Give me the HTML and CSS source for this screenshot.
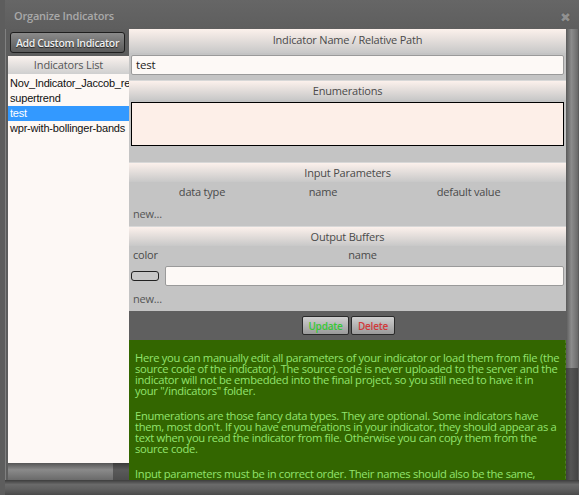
FILE: index.html
```html
<!DOCTYPE html>
<html>
<head>
<meta charset="utf-8">
<link rel="stylesheet" href="styles.css">
</head>
<body>
<div class="window">
  <div class="titlebar">
    <span class="title">Organize Indicators</span>
    <span class="close">&#x2716;</span>
  </div>
  <div class="body">
    <div class="left">
      <button class="add-btn">Add Custom Indicator</button>
      <div class="list-head">Indicators List</div>
      <div class="list">
        <div class="item">Nov_Indicator_Jaccob_re</div>
        <div class="item">supertrend</div>
        <div class="item sel">test</div>
        <div class="item">wpr-with-bollinger-bands</div>
      </div>
      <div class="hscroll"><div class="hthumb"></div></div>
    </div>
    <div class="center">
      <div class="section">
        <div class="head">Indicator Name / Relative Path</div>
        <div class="sbody name-body">
          <div class="input">test</div>
        </div>
      </div>
      <div class="section">
        <div class="head">Enumerations</div>
        <div class="sbody enum-body">
          <div class="textarea"></div>
        </div>
      </div>
      <div class="section">
        <div class="head">Input Parameters</div>
        <div class="sbody">
          <div class="cols3">
            <span>data type</span><span>name</span><span>default value</span>
          </div>
          <div class="new">new...</div>
        </div>
      </div>
      <div class="section">
        <div class="head">Output Buffers</div>
        <div class="sbody">
          <div class="cols2"><span class="c1">color</span><span class="c2">name</span></div>
          <div class="bufrow"><span class="swatch"></span><div class="input wide"></div></div>
          <div class="new">new...</div>
        </div>
      </div>
      <div class="actions">
        <button class="btn upd">Update</button><button class="btn del">Delete</button>
      </div>
      <div class="help">
        <p>Here you can manually edit all parameters of your indicator or load them from file (the<br>source code of the indicator). The source code is never uploaded to the server and the<br>indicator will not be embedded into the final project, so you still need to have it in<br>your "/indicators" folder.</p>
        <p>Enumerations are those fancy data types. They are optional. Some indicators have<br>them, most don't. If you have enumerations in your indicator, they should appear as a<br>text when you read the indicator from file. Otherwise you can copy them from the<br>source code.</p>
        <p>Input parameters must be in correct order. Their names should also be the same,<br>although this is not mandatory. The names must be valid variable names, containing only letters, digits and underscores.</p>
      </div>
    </div>
    <div class="vscroll"><div class="vthumb"></div></div>
  </div>
  <div class="bottom"></div>
</div>
</body>
</html>
```

FILE: styles.css
```css
html, body {
  margin: 0;
  padding: 0;
  background: #4a4a4a;
}
.window {
  width: 579px;
  height: 495px;
  background: #5d5d5d;
  display: flex;
  flex-direction: column;
  overflow: hidden;
  box-sizing: border-box;
  border-left: 5px solid #5d5d5d;
  box-shadow: inset 6px 0 0 -5px #808080;
  font-family: "Open Sans", sans-serif;
}
.titlebar {
  height: 29px;
  display: flex;
  align-items: center;
  justify-content: space-between;
  padding: 0 8px 0 9px;
  background: linear-gradient(#666, #5e5e5e);
  box-sizing: border-box;
}
.title {
  color: #a9a9a9;
  font-size: 11px;
  font-weight: 600;
  letter-spacing: -0.2px;
  padding-top: 2px;
}
.close {
  color: #909090;
  font-size: 13px;
  padding-top: 5px;
  text-shadow: 0 0 1px #444;
}
.body {
  flex: 1;
  display: flex;
  min-height: 0;
}
.left {
  width: 121px;
  margin-left: 3px;
  display: flex;
  flex-direction: column;
}
.add-btn {
  margin: 3px 4px 3px 2px;
  height: 21px;
  padding: 0;
  border: 1px solid #1e1e1e;
  border-radius: 3px;
  background: linear-gradient(#8a8a8a, #5a5a5a);
  color: #f0f0f0;
  font-family: "Open Sans", sans-serif;
  font-size: 10.5px;
  letter-spacing: -0.35px;
  white-space: nowrap;
  font-weight: 600;
  text-shadow: 0 1px 1px #222;
}
.list-head {
  height: 18px;
  line-height: 18px;
  text-align: center;
  color: #555;
  font-size: 11px;
  letter-spacing: -0.15px;
  background: linear-gradient(#faf2ee, #cfcfcf);
}
.list {
  flex: 1;
  background: #fdf8f5;
  font-family: "Liberation Sans", Arial, sans-serif;
  font-size: 11px;
  letter-spacing: -0.2px;
  color: #111;
  white-space: nowrap;
  overflow: hidden;
  padding-top: 2px;
}
.item {
  height: 15px;
  line-height: 15px;
  padding-left: 2px;
}
.item.sel {
  background: #3399ff;
  color: #fff;
}
.hscroll {
  height: 17px;
  background: linear-gradient(#3a3a3a, #5a5a5a 40%, #4d4d4d);
  display: flex;
}
.hthumb {
  width: 105px;
  background: linear-gradient(#555, #8a8a8a 40%, #6a6a6a);
}
.center {
  width: 437px;
  overflow: hidden;
  background: #c4c4c4;
}
.head {
  height: 19px;
  line-height: 19px;
  text-align: center;
  font-size: 11px;
  letter-spacing: -0.2px;
  color: #4a4a4a;
  background: linear-gradient(#fcf1ec, #c8c8c8);
  border-top: 1px solid #d8d8d8;
}
.section:first-child .head {
  height: 24px;
  line-height: 22px;
  border-top: none;
}
.sbody {
  background: #c4c4c4;
  font-size: 11px;
  letter-spacing: -0.2px;
  color: #4a4a4a;
}
.name-body {
  padding: 2px 2px 5px 2px;
}
.input {
  height: 18px;
  line-height: 18px;
  background: #fdf9f6;
  border: 1px solid #9a9a9a;
  border-radius: 2px;
  padding-left: 4px;
  font-size: 11.5px;
  color: #222;
}
.enum-body {
  padding: 2px 2px 16px 2px;
}
.textarea {
  height: 42px;
  background: #fdefe8;
  border: 1px solid #000;
}
.cols3 {
  display: grid;
  grid-template-columns: 146px 96px 1fr;
  text-align: center;
  height: 18px;
  line-height: 18px;
  padding-top: 1px;
}
.new {
  height: 25px;
  line-height: 25px;
  padding-left: 4px;
  color: #555;
}
.cols2 {
  display: flex;
  height: 18px;
  line-height: 18px;
}
.c1 {
  width: 30px;
  padding-left: 4px;
  box-sizing: border-box;
  white-space: nowrap;
}
.c2 {
  flex: 1;
  text-align: center;
}
.bufrow {
  display: flex;
  align-items: center;
  gap: 6px;
  padding: 2px 2px 0 2px;
}
.swatch {
  width: 26px;
  height: 8px;
  border: 1px solid #222;
  border-radius: 3px;
  background: #c8c8c8;
}
.input.wide {
  flex: 1;
}
.actions {
  height: 29px;
  background: #5f5f5f;
  display: flex;
  justify-content: center;
  align-items: center;
  gap: 2px;
  padding-left: 2px;
}
.btn {
  height: 19px;
  padding: 0;
  border: 1px solid #2a2a2a;
  border-radius: 2px;
  background: linear-gradient(#cfcfcf, #9a9a9a);
  font-family: "Open Sans", sans-serif;
  font-size: 10px;
  letter-spacing: -0.2px;
  font-weight: 600;
}
.upd { color: #36c936; width: 47px; }
.del { color: #d23a3a; width: 44px; }
.help {
  background: #336600;
  color: #92e46e;
  font-size: 11.2px;
  letter-spacing: -0.3px;
  line-height: 11px;
  padding: 12px 3px 4px 6px;
  border-right: 1px dashed #4c7d22;
}
.help p {
  margin: 0 0 14px 0;
}
.vscroll {
  width: 12px;
  background: linear-gradient(90deg, #3f3f3f, #555 40%, #444);
  display: flex;
  flex-direction: column;
}
.vthumb {
  height: 339px;
  background: linear-gradient(90deg, #5a5a5a, #8c8c8c 45%, #6a6a6a);
}
.bottom {
  height: 15px;
  background: linear-gradient(#3d3d3d, #6a6a6a 30%, #606060 60%, #4a4a4a);
}
```
